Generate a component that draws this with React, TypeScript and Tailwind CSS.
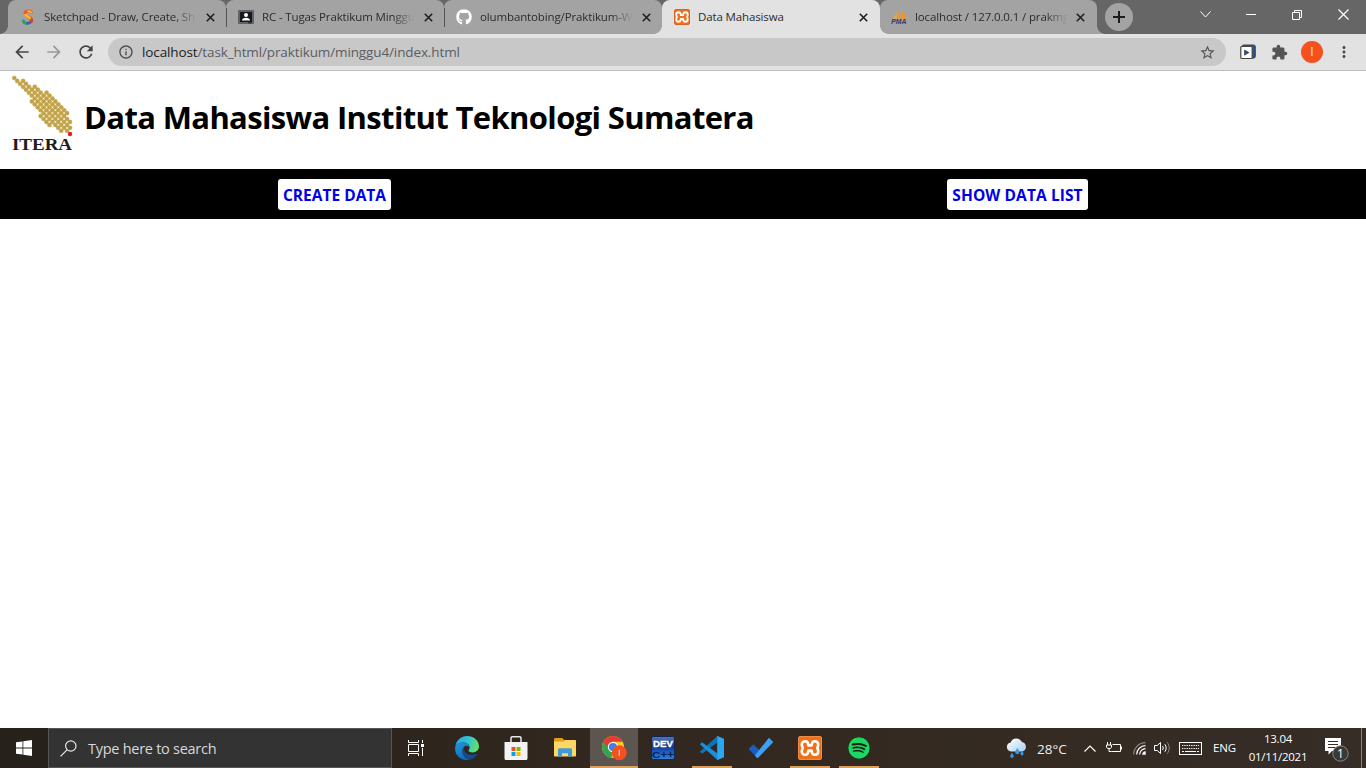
import type { ReactNode } from "react";
import { FaGithub, FaSpotify } from "react-icons/fa";
import {
  MdArrowBack,
  MdArrowForward,
  MdExtension,
  MdInfoOutline,
  MdMoreVert,
  MdRefresh,
  MdStarBorder,
} from "react-icons/md";

/* ---------- favicons ---------- */

function SketchpadIcon() {
  return (
    <svg width="16" height="16" viewBox="0 0 16 16" fill="none" strokeLinecap="round">
      <path d="M7.500 14.200C5 14.400 3.600 13.400 3.400 12" stroke="#2f9e6b" strokeWidth="3" />
      <path d="M11.200 12.300C10.300 13.800 9 14.200 7.500 14.200" stroke="#3c63b8" strokeWidth="3" />
      <path d="M8.500 8C11 9.300 12.200 10.300 11.400 12" stroke="#e0401f" strokeWidth="3.200" />
      <path d="M4.900 4.600C5.200 6.600 6.800 7 8.800 8.200" stroke="#f39a1d" strokeWidth="3.400" />
      <path d="M11.400 3.400C10.500 1.600 6 1 4.900 4" stroke="#ea5a2a" strokeWidth="3" />
      <path d="M8 2.200c1.500 0 2.500.4 3.300 1.200M5.200 5.500C6 7 8.500 7.600 10.500 9.500" stroke="#f8cf3e" strokeWidth="1.400" />
    </svg>
  );
}

function ClassroomIcon() {
  return (
    <svg width="16" height="16" viewBox="0 0 16 16">
      <rect y="1" width="16" height="14" rx="1" fill="#5f6368" />
      <rect x="2" y="3" width="12" height="10" fill="#17191c" />
      <circle cx="8" cy="6" r="2" fill="#fff" />
      <path d="M4 11.500c0-2 2-2.800 4-2.800s4 .8 4 2.800z" fill="#fff" />
      <rect x="10" y="13" width="4" height="1.400" fill="#303236" />
    </svg>
  );
}

function XamppIcon({ big }: { big?: boolean }) {
  return big ? (
    <span className="flex size-6 items-center justify-center rounded-[2px] border border-[#f08a45] bg-[#f0701a]">
      <XamppGlyph size={20} />
    </span>
  ) : (
    <span className="flex size-4 items-center justify-center rounded-[2px] border border-[#d9661f] bg-[#f0701f]">
      <XamppGlyph size={14} />
    </span>
  );
}

function XamppGlyph({ size }: { size: number }) {
  return (
    <svg width={size} height={size} viewBox="0 0 20 20" fill="none" stroke="#fff" strokeWidth="2.600" strokeLinejoin="round">
      <path d="M8.400 7.400H11.600C11.800 4.600 12.400 3.200 14.600 3.200C17 3.200 18.200 4.700 18.200 6.600C18.200 8.300 17.700 9.300 17.200 10C17.700 10.700 18.200 11.700 18.200 13.400C18.200 15.300 17 16.800 14.600 16.800C12.400 16.800 11.800 15.400 11.600 12.600H8.400C8.200 15.400 7.600 16.800 5.400 16.800C3 16.800 1.800 15.300 1.800 13.400C1.800 11.700 2.300 10.700 2.800 10C2.300 9.300 1.800 8.300 1.800 6.600C1.800 4.700 3 3.200 5.400 3.200C7.600 3.200 8.200 4.600 8.400 7.400Z" />
    </svg>
  );
}

function PmaIcon() {
  return (
    <svg width="16" height="16" viewBox="0 0 17 16" className="shrink-0">
      <path d="M6.300 1C5.700 4.500 3.500 8 1 10.500l5.300-.8z" fill="#d7a75f" />
      <path d="M8 .5c1.500 3 2 6 1.600 9.300L6.400 10C7.800 7 8.200 4 8 .5z" fill="#f59422" />
      <path d="M11.500 1.500c2.800 2.500 4.300 5.200 4.800 8.300l-6 .2c1.200-2.500 1.700-5 1.200-8.500z" fill="#f59422" />
      <text x="0.300" y="15.600" fontFamily="Liberation Sans, sans-serif" fontSize="7" fontWeight="bold" fontStyle="italic" fill="#34386b" textLength="16" lengthAdjust="spacingAndGlyphs">PMA</text>
    </svg>
  );
}

/* ---------- browser chrome ---------- */

type TabData = { title: string; icon: ReactNode; active?: boolean; divider?: boolean; fade?: boolean };

const tabs: TabData[] = [
  { title: "Sketchpad - Draw, Create, Share!", icon: <SketchpadIcon />, divider: true, fade: true },
  { title: "RC - Tugas Praktikum Minggu 4", icon: <ClassroomIcon />, divider: true, fade: true },
  { title: "olumbantobing/Praktikum-Web", icon: <FaGithub size={16} color="#fff" />, fade: true },
  { title: "Data Mahasiswa", icon: <XamppIcon />, active: true },
  { title: "localhost / 127.0.0.1 / prakmgg4", icon: <PmaIcon />, fade: true },
];

function Tab({ tab }: { tab: TabData }) {
  return (
    <div
      className={
        tab.active
          ? "relative flex h-[34px] w-[218px] shrink-0 items-center rounded-t-lg bg-[#e2e2e2] pr-3 pl-3"
          : "relative flex h-[34px] w-[218px] shrink-0 items-center rounded-t-lg bg-[#a3a3a3] pr-[11px] pl-3 last:w-[217px] last:pr-[12px] last:pl-[11px]"
      }
    >
      <span className="flex w-4 shrink-0 justify-center">{tab.icon}</span>
      <span
        className={
          "ml-2 w-[154px] shrink-0 overflow-hidden whitespace-nowrap text-[11.5px] leading-4 tracking-[-0.13px] text-[#2c2c2c]" +
          (tab.fade ? " [mask-image:linear-gradient(to_right,black_85%,transparent_99%)]" : "")
        }
      >
        {tab.title}
      </span>
      <svg className="ml-auto shrink-0" width="9" height="9" viewBox="0 0 9 9" stroke="#1f1f1f" strokeWidth="1.600">
        <path d="M.8.8l7.400 7.400M8.200.8L.8 8.200" />
      </svg>
      {tab.divider && <span className="absolute -right-px top-[8px] z-10 h-[19px] w-px bg-[#555]" />}
    </div>
  );
}

function TabStrip() {
  return (
    <div className="flex h-[34px] bg-[#666] pl-2">
      <div className="relative flex">
        <div className="flex">
          {tabs.map((t) => (
            <Tab key={t.title} tab={t} />
          ))}
        </div>
        {/* rounded feet of the strip and of the active tab */}
        <span className="absolute bottom-0 -left-2 size-2 bg-[radial-gradient(circle_at_0_0,transparent_7.5px,#a3a3a3_8px)]" />
        <span className="absolute bottom-0 left-[646px] size-2 bg-[radial-gradient(circle_at_0_0,#a3a3a3_7.5px,#e2e2e2_8px)]" />
        <span className="absolute bottom-0 left-[872px] size-2 bg-[radial-gradient(circle_at_100%_0,#a3a3a3_7.5px,#e2e2e2_8px)]" />
        <span className="absolute bottom-0 -right-2 size-2 bg-[radial-gradient(circle_at_100%_0,#666_7.5px,#a3a3a3_8px)]" />
      </div>
      <span className="mt-[3px] ml-[8px] flex size-7 shrink-0 items-center justify-center rounded-full bg-[#a3a3a3]">
        <svg width="12" height="12" viewBox="0 0 12 12" stroke="#1c1c1c" strokeWidth="2"><path d="M6 0v12M0 6h12" /></svg>
      </span>
      <div className="ml-auto flex h-[29px] items-center">
        <span className="flex w-[46px] justify-center">
          <svg width="11" height="7" viewBox="0 0 11 7" fill="none" stroke="#fff"><path d="M.5.5l5 5.500 5-5.500" /></svg>
        </span>
        <span className="flex w-[46px] justify-center">
          <svg width="10" height="1" viewBox="0 0 10 1"><path d="M0 0h10v1H0z" fill="#fff" /></svg>
        </span>
        <span className="flex w-[46px] justify-center">
          <svg width="10" height="10" viewBox="0 0 10 10" fill="none" stroke="#fff"><path d="M.5 2.500h7v7h-7zM2.500 2.500v-2h7v7h-2" /></svg>
        </span>
        <span className="flex w-[46px] justify-center">
          <svg width="11" height="11" viewBox="0 0 11 11" fill="none" stroke="#fff" strokeWidth="1.200"><path d="M.5.5l10 10M10.500.5l-10 10" /></svg>
        </span>
      </div>
    </div>
  );
}

function Toolbar() {
  return (
    <div className="flex h-[37px] items-center border-b border-[#bdbdbd] bg-[#e2e2e2] pl-3">
      <MdArrowBack size={20} color="#444" className="shrink-0" />
      <MdArrowForward size={20} color="#999" className="ml-3 shrink-0" />
      <MdRefresh size={20} color="#444" className="ml-3 shrink-0" />
      <div className="ml-3 flex h-7 w-[1118px] shrink-0 items-center rounded-full bg-[#c8c8c8] pl-[10px] pr-[10px]">
        <MdInfoOutline size={16} color="#4c4c4c" />
        <span className="ml-2 text-[13.5px] leading-5 tracking-[-0.12px] text-[#5a5d61]">
          <span className="text-[#202124]">localhost</span>/task_html/praktikum/minggu4/index.html
        </span>
        <MdStarBorder size={17} color="#555" className="ml-auto" />
      </div>
      <svg className="ml-[14px] shrink-0" width="16" height="16" viewBox="0 0 16 16">
        <rect x="2" y="1" width="13.300" height="13" rx="1.500" fill="#24559c" stroke="#444" />
        <rect x=".8" y="2.500" width="11.400" height="12" rx="1" fill="#fff" stroke="#444" strokeWidth="1.200" />
        <path d="M4.500 6l4.500 2.600-4.500 2.600z" fill="#1b4fa0" stroke="#333" strokeWidth=".6" />
      </svg>
      <MdExtension size={17} color="#555" className="ml-[15px] shrink-0" />
      <span className="ml-[13px] flex size-[22px] shrink-0 items-center justify-center rounded-full bg-[#f4511e] font-['Roboto',sans-serif] text-[12px] text-[#f6ddd6]">I</span>
      <MdMoreVert size={18} color="#4a4a4a" className="ml-[12px] shrink-0" />
    </div>
  );
}

/* ---------- page ---------- */

// Each entry is one diagonal of the logo: offset, first and last column on it.
const diagonals = [
  [3, 11, 18],
  [2, 7, 19],
  [1, 3, 19],
  [0, 0, 18],
  [-1, 6, 16],
  [-2, 9, 12],
];
const STEP = 2.93;

const dots = diagonals.flatMap(([d, from, to]) =>
  Array.from({ length: to - from + 1 }, (_, i) => ({
    key: `${d}-${from + i}`,
    x: 4.3 + (from + i) * STEP,
    y: 4 + (from + i - 2 * d) * STEP,
  })),
);

function IteraLogo() {
  return (
    <svg width="64" height="80" viewBox="0 0 64 80" className="shrink-0">
      {dots.map((p) => (
        <circle key={p.key} cx={p.x} cy={p.y} r="2.500" fill="#e6d9b2" />
      ))}
      {dots.map((p) => (
        <circle key={p.key} cx={p.x} cy={p.y} r="2.100" fill="#c2a349" />
      ))}
      <circle cx="60" cy="60" r="2.200" fill="#e21b23" />
      <text x="2" y="75.700" fontFamily="Liberation Serif, serif" fontWeight="bold" fontSize="17" fill="#1d1b1c" textLength="60" lengthAdjust="spacingAndGlyphs">ITERA</text>
    </svg>
  );
}

function PageLink({ children }: { children: ReactNode }) {
  return (
    <a className="flex h-[31px] items-center justify-center rounded-[3px] bg-white pt-[2px] text-[15.5px] leading-[29px] font-bold whitespace-nowrap text-[#0000e6] first:w-[113px] last:w-[141px] last:tracking-[0.1px]">
      {children}
    </a>
  );
}

function Page() {
  return (
    <main className="flex-1 bg-white">
      <header className="flex h-[98px] items-start pl-[10px] pt-[3px]">
        <IteraLogo />
        <h1 className="ml-[10px] mt-[22px] text-[31px] leading-[43px] font-bold tracking-[-0.64px] whitespace-nowrap text-black">
          Data Mahasiswa Institut Teknologi Sumatera
        </h1>
      </header>
      <nav className="flex h-[50px] justify-around bg-black pt-[10px]">
        <PageLink>CREATE DATA</PageLink>
        <PageLink>SHOW DATA LIST</PageLink>
      </nav>
    </main>
  );
}

/* ---------- taskbar ---------- */

function EdgeIcon() {
  return (
    <svg width="24" height="24" viewBox="0 0 24 24">
      <defs>
        <linearGradient id="edgeTop" x1="0" y1="0.300" x2="1" y2="0.500"><stop offset="0" stopColor="#2aa5e8" /><stop offset=".5" stopColor="#31c3d6" /><stop offset="1" stopColor="#67e05f" /></linearGradient>
        <linearGradient id="edgeLow" x1="0" y1="0" x2="0.600" y2="1"><stop offset="0" stopColor="#1b9de2" /><stop offset="1" stopColor="#1266b8" /></linearGradient>
      </defs>
      <path d="M.3 10.600C1.200 4.500 6 0 12 0c6.800 0 12 4.600 12 10.300 0 3.600-2.700 6.100-6.200 6.100-2.800 0-4.300-.9-4.300-1.900 0-.7 1.100-1.200 1.100-3 0-2.600-2.500-5-6-5C4.600 6.500 1.500 8 .3 10.600z" fill="url(#edgeTop)" />
      <path d="M.2 11.300C1 8.200 4.300 6.500 8.300 6.500c3.500 0 6.200 2.200 6.300 4.900-1-1.200-2.500-1.600-4-1.300-2.700.6-4 4.400-2.600 8 1 2.600 3 4.700 6 5.700C6.500 25.200-.8 19.500.2 11.300z" fill="url(#edgeLow)" />
      <path d="M8.800 11.300c-2.700 2.900-1.500 10.100 5.200 12.500 3.200-.5 6.200-2.400 8-5.300.4-.6-.1-1-.7-.7-4.700 2.400-10.800.4-12-3.400-.3-1-.4-2-.5-3.100z" fill="#114b91" />
    </svg>
  );
}

function StoreIcon() {
  return (
    <svg width="24" height="24" viewBox="0 0 24 24">
      <path d="M7 7V2c0-.8.400-1.200 1.200-1.200h7.600c.8 0 1.200.4 1.200 1.200v5" fill="none" stroke="#e9e9e9" strokeWidth="1.500" />
      <path d="M.5 6h23v16.500c0 .9-.6 1.500-1.500 1.500H2c-.9 0-1.500-.6-1.500-1.500z" fill="#f3f3f3" />
      <path d="M7.500 11h4v4h-4z" fill="#f25022" /><path d="M12.500 11h4v4h-4z" fill="#7fba00" />
      <path d="M7.500 16h4v4h-4z" fill="#00a4ef" /><path d="M12.500 16h4v4h-4z" fill="#ffb900" />
    </svg>
  );
}

function ExplorerIcon() {
  return (
    <svg width="22" height="20" viewBox="0 0 22 20">
      <path d="M0 1.500C0 .6.500 0 1.300 0h7l2 2H20v5H0z" fill="#e0a013" />
      <path d="M0 3.500h9.500L11.500 2H21c.6 0 1 .4 1 1v14.500c0 .6-.4 1-1 1H1c-.6 0-1-.4-1-1z" fill="#ffd765" />
      <path d="M4 18.500v-6.700c0-1 .6-1.600 1.600-1.600h10.800c1 0 1.600.6 1.600 1.600v6.700h-4v-3.300H8v3.300z" fill="#3d9bdc" />
    </svg>
  );
}

function ChromeIcon() {
  return (
    <svg width="26" height="26" viewBox="0 0 26 26">
      <circle cx="12" cy="12" r="11" fill="#fbc927" />
      <path d="M12 12L2.500 6.500A11 11 0 0 0 10.500 22.900z" fill="#34a24f" />
      <path d="M2.300 6.800A11 11 0 0 1 21.700 6.800H12l-4.500 7z" fill="#df3e32" />
      <circle cx="12" cy="12" r="5.200" fill="#fff" /><circle cx="12" cy="12" r="4.100" fill="#3f7fe8" />
      <circle cx="18.300" cy="17.800" r="7.500" fill="#f4511e" />
      <path d="M18.300 14.800v6" stroke="#ffc8b8" strokeWidth="1.200" />
    </svg>
  );
}

function DevIcon() {
  return (
    <svg width="24" height="24" viewBox="0 0 24 24">
      <defs><linearGradient id="dev" x1="0" y1="0" x2="0" y2="1"><stop offset="0" stopColor="#5878ba" /><stop offset=".45" stopColor="#17357f" /><stop offset=".6" stopColor="#1652bd" /><stop offset="1" stopColor="#2b83dd" /></linearGradient></defs>
      <rect x=".5" y=".5" width="23" height="23" rx="2" fill="url(#dev)" stroke="#122552" />
      <text x="2" y="11" fontFamily="Liberation Sans, sans-serif" fontSize="9.500" fontWeight="bold" fill="#fff" stroke="#fff" strokeWidth=".3" textLength="20" lengthAdjust="spacingAndGlyphs">DEV</text>
      <text x="1" y="22" fontFamily="Liberation Sans, sans-serif" fontSize="9.500" fontWeight="bold" fill="#0b1d4a" textLength="22" lengthAdjust="spacingAndGlyphs">C++</text>
    </svg>
  );
}

function CodeIcon() {
  return (
    <svg width="24" height="24" viewBox="0 0 24 24">
      <path d="M.4 15.300L17.500 0v6.600L2.700 17.300c-.4.300-.9.200-1.200-.1L.3 16.100c-.2-.3-.2-.6.100-.8z" fill="#0f72b8" />
      <path d="M.4 8.700L17.500 24v-6.600L2.700 6.700c-.4-.3-.9-.2-1.200.1L.3 7.900c-.2.300-.2.600.1.800z" fill="#1a8fdb" />
      <path d="M17.500 0L24 2.800v18.400L17.500 24c-.7.200-.6-.3-.300-1V1c-.3-.7-.4-1.200.300-1z" fill="#2ba7f2" />
    </svg>
  );
}

function TodoIcon() {
  return (
    <svg width="24" height="20" viewBox="0 0 24 20">
      <path d="M4.300 6.200L0 10.500c-.3.300-.3.700 0 1l8 8 5-5z" fill="#1d5bbf" />
      <path d="M5.900 17.400L19.300.4c.3-.4.800-.4 1.100-.1L23.700 3.600c.4.400.4.800 0 1.200L9.100 19.700c-.5.400-.9.400-1.300 0z" fill="#3ea0ee" />
    </svg>
  );
}

const apps: { name: string; icon: ReactNode; open?: boolean; current?: boolean }[] = [
  { name: "edge", icon: <EdgeIcon /> },
  { name: "store", icon: <StoreIcon /> },
  { name: "explorer", icon: <ExplorerIcon /> },
  { name: "chrome", icon: <ChromeIcon />, current: true },
  { name: "dev", icon: <DevIcon /> },
  { name: "code", icon: <CodeIcon />, open: true },
  { name: "todo", icon: <TodoIcon /> },
  { name: "xampp", icon: <XamppIcon big />, open: true },
  { name: "spotify", icon: <FaSpotify size={22} color="#1ed760" className="rounded-full bg-[#1a211b]" />, open: true },
];

function Tray() {
  return (
    <div className="ml-auto flex h-10 items-center text-white">
      <svg width="22" height="22" viewBox="0 0 22 22" className="mt-[2px] shrink-0">
        <defs><linearGradient id="cloud" x1="0" y1="0" x2="1" y2="1"><stop offset="0" stopColor="#fff" /><stop offset="1" stopColor="#a9cfee" /></linearGradient></defs>
        <path d="M5 13.500a4.600 4.600 0 0 1-.3-9.100A6 6 0 0 1 15.800 4 4.900 4.900 0 0 1 16.500 13.500z" fill="url(#cloud)" />
        <path d="M11.300 10c-1.500 2.200-2.100 3.100-2.100 4.200a2.100 2.100 0 0 0 4.200 0c0-1.100-.6-2-2.100-4.200zM6 14.800c-1.300 1.900-1.800 2.700-1.800 3.500a1.800 1.800 0 0 0 3.600 0c0-.8-.5-1.600-1.800-3.500zM16 12.500c-1.200 1.800-1.600 2.500-1.600 3.300a1.600 1.600 0 0 0 3.200 0c0-.8-.4-1.500-1.600-3.300z" fill="#3a96e0" />
      </svg>
      <span className="ml-[9px] mt-[2px] w-[33px] text-[13.5px] leading-5 whitespace-nowrap text-[#eee]">28°C</span>
      <svg className="ml-[14px] shrink-0" width="12" height="7" viewBox="0 0 12 7" fill="none" stroke="#fff" strokeWidth="1.200"><path d="M.5 6.500L6 1l5.500 5.500" /></svg>
      <svg className="ml-[10px] shrink-0" width="16" height="12" viewBox="0 0 16 12" fill="none" stroke="#fff">
        <path d="M6.500 2.500h8v7h-9M15.500 4.500v3M1.500 0v3M4.500 0v3M.5 3h5v2c0 1-.8 1.500-2.500 1.500S.5 6 .5 5zM3 6.500v3h2.500" />
      </svg>
      <svg className="ml-[11px] shrink-0" width="13" height="13" viewBox="0 0 13 13" fill="none" strokeWidth="1.200">
        <path d="M.7 12.500A11.800 11.800 0 0 1 12.500.7" stroke="#8d8883" />
        <path d="M3.700 12.500A8.800 8.800 0 0 1 12.500 3.700M6.700 12.500A5.800 5.800 0 0 1 12.500 6.700" stroke="#fff" />
        <path d="M9.500 12.500a3 3 0 0 1 3-3v3z" fill="#fff" stroke="#fff" strokeWidth=".5" />
      </svg>
      <svg className="ml-[8px] shrink-0" width="17" height="14" viewBox="0 0 17 14" fill="none" stroke="#fff">
        <path d="M.5 4.500h2.700l3.300-3v11l-3.300-3H.5zM8.500 5c.9 1 .9 3 0 4M10.800 3.200c1.800 2.200 1.800 5.400 0 7.600" />
        <path d="M13.200 1.300c2.700 3.300 2.700 8.100 0 11.400" stroke="#8d8883" />
      </svg>
      <svg className="ml-[8px] shrink-0" width="23" height="13" viewBox="0 0 23 13" fill="none" stroke="#fff">
        <rect x=".5" y=".5" width="22" height="12" /><path d="M3 3.500h17M3 6.500h17" strokeDasharray="1.300 1" /><path d="M3 9.500h2M6 9.500h11M18 9.500h2" />
      </svg>
      <span className="ml-[11px] w-[24px] text-[11.5px] tracking-[-0.2px] whitespace-nowrap">ENG</span>
      <div className="ml-[10px] flex w-[62px] flex-col items-center text-[11.5px] leading-[18px] tracking-[-0.25px] whitespace-nowrap">
        <span>13.04</span>
        <span>01/11/2021</span>
      </div>
      <svg className="ml-[16px] mt-[4px] shrink-0" width="24" height="24" viewBox="0 0 24 24">
        <path d="M0 0h16v13H7l-3.500 3.500V13H0z" fill="#fff" />
        <path d="M3 3.500h10M3 6.500h10M3 9.500h7" stroke="#37302a" />
        <circle cx="15.500" cy="15.500" r="7.700" fill="#3b3937" stroke="#8a8783" />
        <text x="15.500" y="19.700" textAnchor="middle" fontFamily="Open Sans, sans-serif" fontSize="12" fill="#fff">1</text>
      </svg>
      <span className="ml-[12px] mr-[4px] h-10 w-px bg-[#8a8479]" />
    </div>
  );
}

function Taskbar() {
  return (
    <footer className="flex h-10 items-center bg-linear-to-r from-[#26211b] via-[#33281f] to-[#352d26]">
      <span className="flex w-12 justify-center">
        <svg width="16" height="16" viewBox="0 0 16 16" fill="#fff"><path d="M0 2.300l6.500-.9v6.100H0zM7.300 1.300L16 0v7.500H7.300zM0 8.400h6.500v6.200L0 13.700zM7.300 8.400H16V16l-8.700-1.200z" /></svg>
      </span>
      <div className="flex h-10 w-[344px] items-center border border-[#565656] bg-[#333] pl-[11px]">
        <svg width="17" height="17" viewBox="0 0 17 17" fill="none" stroke="#e8e8e8" strokeWidth="1.200"><circle cx="10.800" cy="6" r="5.200" /><path d="M7 9.800L.5 16.300" /></svg>
        <span className="ml-[11px] mt-[2px] text-[14.500px] leading-5 tracking-[-0.27px] text-[#d8d8d8]">Type here to search</span>
      </div>
      <span className="flex w-[48px] justify-center">
        <svg width="17" height="16" viewBox="0 0 17 16" fill="none" stroke="#fff">
          <path d="M.5 0v2.500h10V0M.5 4.500h10v7H.5zM.5 16v-2.500h10V16M14.500 0v3M14.500 8v8" /><path d="M13 4h3v3h-3z" fill="#fff" stroke="none" />
        </svg>
      </span>
      <div className="ml-[3px] flex gap-px">
        {apps.map((a) => (
          <span key={a.name} className={a.current ? "relative flex h-10 w-12 items-center justify-center bg-[#5d5650]" : "relative flex h-10 w-12 items-center justify-center"}>
            {a.icon}
            {a.current && <span className="absolute inset-x-0 bottom-0 h-[2px] bg-[#d99f5b]" />}
            {a.open && <span className="absolute inset-x-1 bottom-0 h-[2px] bg-[#d99f5b]" />}
          </span>
        ))}
      </div>
      <Tray />
    </footer>
  );
}

export default function App() {
  return (
    <div className="flex h-[768px] w-[1366px] flex-col overflow-hidden bg-white font-['Open_Sans','Noto_Sans',sans-serif]">
      <TabStrip />
      <Toolbar />
      <Page />
      <Taskbar />
    </div>
  );
}
